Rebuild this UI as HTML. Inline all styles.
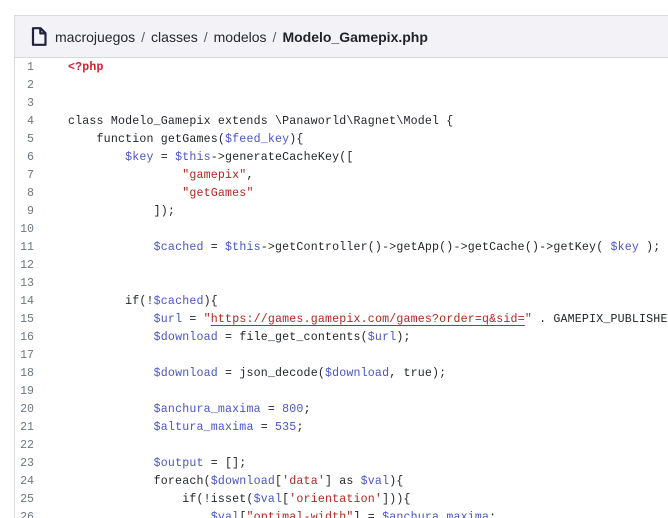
<!DOCTYPE html>
<html><head><meta charset="utf-8"><style>
html,body{margin:0;padding:0;background:#fff;width:668px;height:518px;overflow:hidden;position:relative}
.box{position:absolute;left:14px;top:15px;width:654px;height:503px;border:1px solid #dcdce0;border-right:none;border-bottom:none;box-sizing:border-box}
.hdr{height:42px;box-sizing:border-box;background:#f3f2f7;border-bottom:1px solid #d8d8dc;position:relative;font-family:"Liberation Sans",sans-serif;font-size:14px;color:#24292f}
.hdr .t{position:absolute;left:40px;top:13px;white-space:nowrap}
.hdr .s{color:#57606a;margin:0 6px}
.hdr b{font-weight:bold;color:#1f2328}
.icon{position:absolute;left:16px;top:11px}
.code{position:absolute;overflow:hidden;font-family:"Liberation Mono",monospace;font-size:11.6px;letter-spacing:0.18px;line-height:18px;color:#1f2328;white-space:pre}
.ln{position:absolute;left:0;width:20px;text-align:right;color:#6e7781;letter-spacing:0}
.tx{position:absolute;left:54px}
.v{color:#4a55c8}.s2{color:#b3261e}.r{color:#cf222e;font-weight:bold}
.u{text-decoration:underline;text-decoration-color:#cf222e;text-underline-offset:3px}
</style></head><body>
<div class="box">
<div class="hdr">
<svg class="icon" width="16" height="19" viewBox="0 0 16 19"><path d="M2 1.2h7.5l5 5v11.6H2z M9.3 1.2v5.2h5.2" fill="none" stroke="#1f2340" stroke-width="2.2" stroke-linejoin="round"/></svg>
<div class="t">macrojuegos<span class="s">/</span>classes<span class="s">/</span>modelos<span class="s">/</span><b>Modelo_Gamepix.php</b></div>
</div>
</div>
<div class="code" style="left:14px;top:59px;width:654px;height:459px">
<div class="ln" style="top:0">1</div><div class="tx" style="top:0"><span class="r">&lt;?php</span></div>
<div class="ln" style="top:18px">2</div>
<div class="ln" style="top:36px">3</div>
<div class="ln" style="top:54px">4</div><div class="tx" style="top:54px">class Modelo_Gamepix extends \Panaworld\Ragnet\Model {</div>
<div class="ln" style="top:72px">5</div><div class="tx" style="top:72px">    function getGames(<span class="v">$feed_key</span>){</div>
<div class="ln" style="top:90px">6</div><div class="tx" style="top:90px">        <span class="v">$key</span> = <span class="v">$this</span>-&gt;generateCacheKey([</div>
<div class="ln" style="top:108px">7</div><div class="tx" style="top:108px">                <span class="s2">"gamepix"</span>,</div>
<div class="ln" style="top:126px">8</div><div class="tx" style="top:126px">                <span class="s2">"getGames"</span></div>
<div class="ln" style="top:144px">9</div><div class="tx" style="top:144px">            ]);</div>
<div class="ln" style="top:162px">10</div>
<div class="ln" style="top:180px">11</div><div class="tx" style="top:180px">            <span class="v">$cached</span> = <span class="v">$this</span>-&gt;getController()-&gt;getApp()-&gt;getCache()-&gt;getKey( <span class="v">$key</span> );</div>
<div class="ln" style="top:198px">12</div>
<div class="ln" style="top:216px">13</div>
<div class="ln" style="top:234px">14</div><div class="tx" style="top:234px">        if(!<span class="v">$cached</span>){</div>
<div class="ln" style="top:252px">15</div><div class="tx" style="top:252px">            <span class="v">$url</span> = <span class="s2">"<span class="u">https://games.gamepix.com/games?order=q&amp;sid=</span>"</span> . GAMEPIX_PUBLISHER_ID;</div>
<div class="ln" style="top:270px">16</div><div class="tx" style="top:270px">            <span class="v">$download</span> = file_get_contents(<span class="v">$url</span>);</div>
<div class="ln" style="top:288px">17</div>
<div class="ln" style="top:306px">18</div><div class="tx" style="top:306px">            <span class="v">$download</span> = json_decode(<span class="v">$download</span>, true);</div>
<div class="ln" style="top:324px">19</div>
<div class="ln" style="top:342px">20</div><div class="tx" style="top:342px">            <span class="v">$anchura_maxima</span> = <span class="v">800</span>;</div>
<div class="ln" style="top:360px">21</div><div class="tx" style="top:360px">            <span class="v">$altura_maxima</span> = <span class="v">535</span>;</div>
<div class="ln" style="top:378px">22</div>
<div class="ln" style="top:396px">23</div><div class="tx" style="top:396px">            <span class="v">$output</span> = [];</div>
<div class="ln" style="top:414px">24</div><div class="tx" style="top:414px">            foreach(<span class="v">$download</span>[<span class="s2">'data'</span>] as <span class="v">$val</span>){</div>
<div class="ln" style="top:432px">25</div><div class="tx" style="top:432px">                if(!isset(<span class="v">$val</span>[<span class="s2">'orientation'</span>])){</div>
<div class="ln" style="top:450px">26</div><div class="tx" style="top:450px">                    <span class="v">$val</span>[<span class="s2">"optimal-width"</span>] = <span class="v">$anchura_maxima</span>;</div>
</div>
</body></html>
